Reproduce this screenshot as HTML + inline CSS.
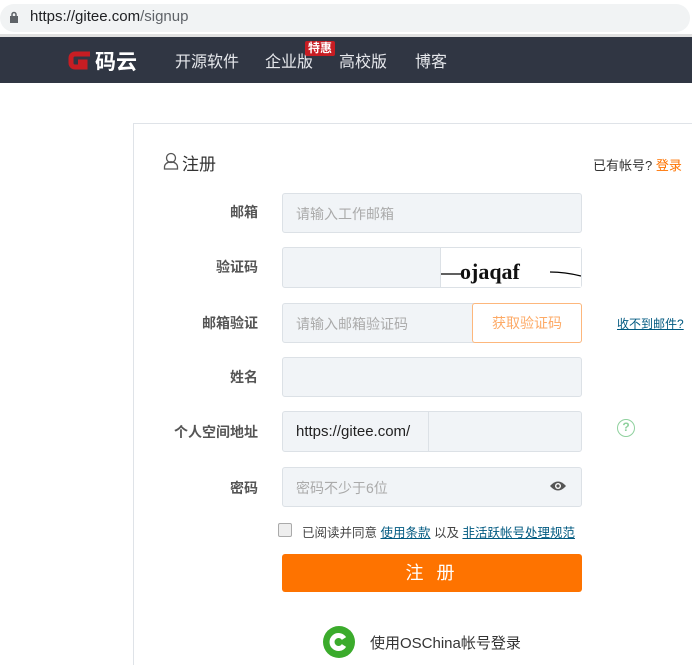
<!DOCTYPE html>
<html style="height:665px;overflow:hidden"><head><meta charset="utf-8"><style>
*{margin:0;padding:0;box-sizing:border-box}
body{width:692px;height:665px;overflow:hidden;background:#fff;font-family:"Liberation Sans","Noto Sans CJK SC",sans-serif;position:relative}
.a{position:absolute}
.url{left:0;top:4px;width:690px;height:28px;background:#f1f3f4;border-radius:14px}
.nav{left:0;top:37px;width:692px;height:46px;background:#303643}
.nav span{position:absolute;color:#e6e8ec;font-size:16px;top:11px}
.card{left:133px;top:123px;width:600px;height:545px;border:1px solid #dfe3e8}
.lbl{font-size:14px;color:#555;font-weight:bold;text-align:right;width:100px;left:158px}
.inp{left:282px;width:300px;height:41px;background:#f1f4f7;border:1px solid #dce1e6;border-radius:3px;font-size:14px;color:#aaa;padding:10px 13px}
</style></head><body>
<div class="a url"></div>
<svg class="a" style="left:9px;top:11px" width="10" height="13"><rect x="1" y="5" width="8" height="7" fill="#5f6368"/><path d="M3 5V3.5a2 2 0 0 1 4 0V5" stroke="#5f6368" stroke-width="1.5" fill="none"/></svg>
<div class="a" style="left:30px;top:8px;font-size:15px;color:#202124">https://<span>gitee.com</span><span style="color:#5f6368">/signup</span></div>
<div class="a" style="left:0;top:34px;width:692px;height:3px;background:#e0e0e0"></div>
<div class="a nav">
<svg class="a" style="left:66px;top:12px" width="25" height="23"><path d="M24 5H9a4 4 0 0 0-4 4v5a4 4 0 0 0 4 4h10v-5h-7" stroke="#c71d23" stroke-width="5" fill="none"/></svg>
<span style="left:95px;top:9px;font-size:21px;font-weight:bold;color:#fff">码云</span>
<span style="left:175px">开源软件</span>
<span style="left:265px">企业版</span>
<div class="a" style="left:305px;top:4px;background:#c71d23;color:#fff;font-size:12px;padding:0 3px;border-radius:2px;line-height:15px;font-weight:bold">特惠</div>
<span style="left:339px">高校版</span>
<span style="left:415px">博客</span>
</div>
<div class="a card"></div>
<svg class="a" style="left:163px;top:152px" width="16" height="18"><circle cx="8" cy="6" r="4.5" stroke="#555" stroke-width="1.3" fill="none"/><path d="M1.5 17v-2a5 4 0 0 1 13 0v2z" stroke="#555" stroke-width="1.3" fill="none"/></svg>
<div class="a" style="left:182px;top:150px;font-size:17px;color:#333">注册</div>
<div class="a" style="left:593px;top:155px;font-size:13px;color:#333">已有帐号? <span style="color:#fe7300">登录</span></div>
<div class="a lbl" style="top:202px">邮箱</div>
<div class="a inp" style="top:193px;height:40px">请输入工作邮箱</div>
<div class="a lbl" style="top:257px">验证码</div>
<div class="a inp" style="top:247px"></div>
<div class="a" style="left:440px;top:248px;width:141px;height:39px;background:#fff;border-left:1px solid #dce1e6"></div>
<svg class="a" style="left:440px;top:248px" width="141" height="39"><path d="M1 26 L22 26" stroke="#000" stroke-width="1.2"/><path d="M110 24 Q125 24 141 28" stroke="#000" stroke-width="1.2" fill="none"/><text x="20" y="31" font-family="Liberation Serif" font-size="22" font-weight="bold" fill="#111">ojaqaf</text></svg>
<div class="a lbl" style="top:313px">邮箱验证</div>
<div class="a inp" style="top:303px;height:40px">请输入邮箱验证码</div>
<div class="a" style="left:472px;top:303px;width:110px;height:40px;background:#fff;border:1px solid #fdb77c;border-radius:3px;color:#fdaa66;font-size:14px;text-align:center;line-height:38px">获取验证码</div>
<div class="a" style="left:617px;top:315px;font-size:12px;color:#005980;text-decoration:underline">收不到邮件?</div>
<div class="a lbl" style="top:367px">姓名</div>
<div class="a inp" style="top:357px;height:40px"></div>
<div class="a lbl" style="top:422px">个人空间地址</div>
<div class="a inp" style="top:411px;color:#222;font-size:15px;padding-top:11px">https://gitee.com/</div>
<div class="a" style="left:428px;top:412px;width:1px;height:39px;background:#dce1e6"></div>
<div class="a" style="left:617px;top:419px;width:18px;height:18px;border:1.5px solid #8fd19e;border-radius:50%;color:#8fd19e;font-size:12px;text-align:center;line-height:15px;font-weight:bold">?</div>
<div class="a lbl" style="top:478px">密码</div>
<div class="a inp" style="top:467px;height:40px">密码不少于6位</div>
<svg class="a" style="left:549px;top:479px" width="18" height="14"><path d="M1 7Q9 -2 17 7Q9 16 1 7z" fill="#555"/><circle cx="9" cy="7" r="3" fill="#fff"/><circle cx="9" cy="7" r="1.6" fill="#555"/></svg>
<div class="a" style="left:278px;top:523px;width:14px;height:14px;border:1px solid #aaa;background:#eee;border-radius:2px"></div>
<div class="a" style="left:302px;top:522px;font-size:12.5px;color:#444">已阅读并同意 <span style="color:#005980;text-decoration:underline">使用条款</span> 以及 <span style="color:#005980;text-decoration:underline">非活跃帐号处理规范</span></div>
<div class="a" style="left:282px;top:554px;width:300px;height:38px;background:#fe7300;border-radius:3px;color:#fff;font-size:18px;text-align:center;line-height:38px;letter-spacing:4px">注 册</div>
<svg class="a" style="left:323px;top:626px" width="32" height="32"><circle cx="16" cy="16" r="16" fill="#3bab2c"/><path d="M21 12.5A6.5 6.5 0 1 0 21 19.5" stroke="#fff" stroke-width="5" fill="none"/></svg>
<div class="a" style="left:370px;top:632px;font-size:15px;color:#333">使用OSChina帐号登录</div>
</body></html>
